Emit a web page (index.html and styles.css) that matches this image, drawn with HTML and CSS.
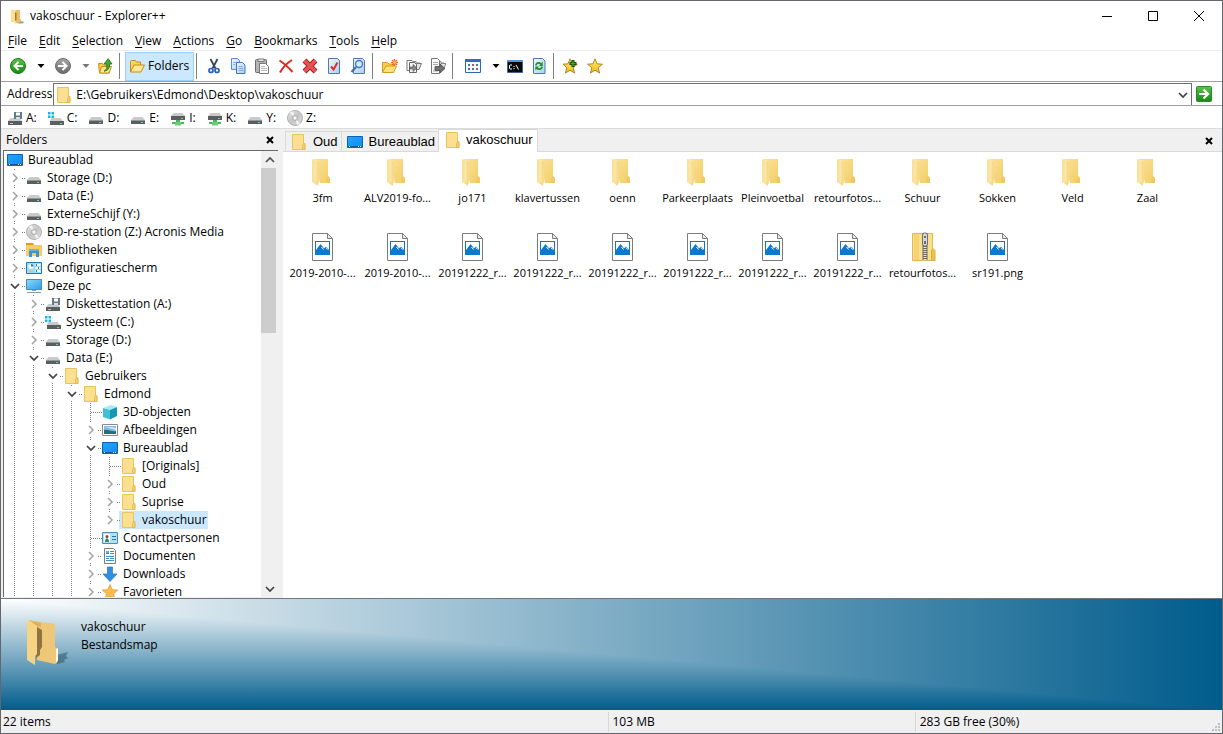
FILE: index.html
```html
<!DOCTYPE html>
<html lang="nl">
<head>
    <meta charset="UTF-8">
    <meta name="viewport" content="width=device-width, initial-scale=1.0">
    <title>vakoschuur - Explorer++</title>
    <link rel="stylesheet" href="styles.css">
</head>
<body>
    <!-- Icon sprite -->
    <svg class="sprite" aria-hidden="true">
        <defs>
            <linearGradient id="g-folder" x1="0" y1="0" x2="1" y2="1"><stop offset="0" stop-color="#fbe29a"/><stop offset="1" stop-color="#f3cd62"/></linearGradient>
            <linearGradient id="g-flap" x1="0" y1="0" x2="1" y2="0"><stop offset="0" stop-color="#f9df94"/><stop offset="1" stop-color="#fdeebb"/></linearGradient>
            <linearGradient id="g-green" x1="0" y1="0" x2="0" y2="1"><stop offset="0" stop-color="#5fc14b"/><stop offset="1" stop-color="#138a12"/></linearGradient>
            <linearGradient id="g-gray" x1="0" y1="0" x2="0" y2="1"><stop offset="0" stop-color="#a8a8a8"/><stop offset="1" stop-color="#696969"/></linearGradient>
            <linearGradient id="g-blue" x1="0" y1="0" x2="1" y2="1"><stop offset="0" stop-color="#2aa4ff"/><stop offset="1" stop-color="#0b8cf0"/></linearGradient>
            <linearGradient id="g-screen" x1="0" y1="0" x2="1" y2="1"><stop offset="0" stop-color="#8edafc"/><stop offset="1" stop-color="#2b9be8"/></linearGradient>
            <linearGradient id="g-disc" x1="0" y1="0" x2="1" y2="1"><stop offset="0" stop-color="#e8e8e8"/><stop offset=".5" stop-color="#c6c6c6"/><stop offset="1" stop-color="#dedede"/></linearGradient>
            <linearGradient id="g-star" x1="0" y1="0" x2="0" y2="1"><stop offset="0" stop-color="#fff27a"/><stop offset="1" stop-color="#f2b51c"/></linearGradient>
            <linearGradient id="g-page" x1="0" y1="0" x2="1" y2="1"><stop offset="0" stop-color="#f4f9ff"/><stop offset="1" stop-color="#a9cdf5"/></linearGradient>
        </defs>
        <symbol id="folder" viewBox="0 0 16 16">
            <path d="M1.500.5h11v9h1.500v6h-12.500z" fill="#fbe091" stroke="#e9c45c"/>
            <path d="M11.500 15.500v-4l1-2 1.500 1.500v4.500z" fill="#f5d06c" stroke="#deb54a" stroke-width=".7"/>
        </symbol>
        <symbol id="folder-mini" viewBox="0 0 16 16">
            <path d="M5 2h6v9l2 1v3H5z" fill="#e9bf62"/>
            <path d="M2 1l5 1.500V16l-3-2H2z" fill="#fbdf94"/>
            <path d="M6 4l1.500 1v7L6 13z" fill="#9c7c3c"/>
            <path d="M12 11h1v3h-1z" fill="#fff"/>
            <path d="M13 13l2 1-1 1.500H8z" fill="#9aa3a6"/>
        </symbol>
        <symbol id="folder-lg" viewBox="0 0 32 32">
            <path d="M7 3h14v17l2 2v5H13z" fill="url(#g-folder)"/>
            <path d="M5 3l7 2V27l-1 1V30L5 26z" fill="url(#g-flap)"/>
            <path d="M11 5l1 .5V26l-1 1V30l-3-2.300 1.500-2V5z" fill="#f4d37c" opacity=".7"/>
            <path d="M19.500 27v-5l1.500-2 2 2v5z" fill="#efc65c" opacity=".7"/>
        </symbol>
        <symbol id="picture" viewBox="1 1 32 32">
            <path d="M6.500 3.500h15l5 5v22h-20z" fill="#fff" stroke="#7c7c7c"/>
            <path d="M21.500 3.500v5h5z" fill="#ececec" stroke="#7c7c7c"/>
            <path d="M9 11h15v14H9z" fill="#0b79d0"/>
            <path d="M10 12h13v8l-3-3.500-2 1.800-3.500-4.300L10 20z" fill="#fff"/>
            <path d="M15.500 17l2 2.500M20 17.500l1.500 2" stroke="#fff"/>
        </symbol>
        <symbol id="zip" viewBox="0 1 32 32">
            <path d="M5.500 3.500h20v27h-20z" fill="#fbe08c" stroke="#dfb953"/>
            <path d="M7 4h5v26H7z" fill="#f6d374"/>
            <path d="M24.500 30.500V20l1.500-1.500 2 2v10z" fill="#efc04d" stroke="#dcae3f"/>
            <path d="M15.500 3h5v27h-5z" fill="#686868"/>
            <path d="M18 15v15" stroke="#e9e4cf" stroke-width="3" stroke-dasharray="1 1"/>
            <rect x="15.500" y="3" width="5" height="13" rx="2" fill="#d8d8d8" stroke="#707070"/>
            <path d="M17 6h2v2h-2zM17 11h2v3h-2z" fill="#6a6a6a"/>
        </symbol>
        <symbol id="drive" viewBox="0 0 16 16">
            <path d="M3.500 7h9L15 10H1z" fill="#c9cbcb"/>
            <path d="M1 10h14v4H1z" fill="#5a5e60"/>
            <path d="M1 10h14v1H1z" fill="#92989a"/>
            <path d="M11 12h2v1h-2z" fill="#5ce08a"/>
        </symbol>
        <symbol id="floppy" viewBox="0 0 16 16">
            <path d="M3.500 8h9L15 11H1z" fill="#c9cbcb"/>
            <path d="M1 11h14v4H1z" fill="#5a5e60"/>
            <path d="M3 13h3v1H3z" fill="#b8c6bc"/>
            <path d="M7 2h8v7H7z" fill="#64798a"/>
            <path d="M9 2.500h4v3H9z" fill="#fff"/>
            <path d="M9 7h4v2H9z" fill="#cfdde6"/>
        </symbol>
        <symbol id="system" viewBox="0 0 16 16">
            <path d="M3.500 8h9L15 11H2z" fill="#c9cbcb"/>
            <path d="M2 11h14v4H2z" fill="#5a5e60"/>
            <path d="M12 13h2v1h-2z" fill="#5ce08a"/>
            <path d="M0 2h2.500v2.500H0zM3.500 2H6v2.500H3.500zM0 5.500h2.500V8H0zM3.500 5.500H6V8H3.500z" fill="#18b4ea"/>
        </symbol>
        <symbol id="network" viewBox="0 0 16 16">
            <path d="M3.500 3h9L15 6H1z" fill="#c9cbcb"/>
            <path d="M1 6h14v4H1z" fill="#5a5e60"/>
            <path d="M11 8h2v1h-2z" fill="#5ce08a"/>
            <path d="M6 10h4v2h4v2H2v-2h4z" fill="#4bb55d"/>
            <path d="M5 12h6v3.500H5z" fill="#6ccb78"/>
        </symbol>
        <symbol id="disc" viewBox="0 0 16 16">
            <circle cx="8" cy="8" r="7.500" fill="url(#g-disc)" stroke="#b0b0b0"/>
            <path d="M8 8L3 2.500A7 7 0 0 1 6 1.200zM8 8l5 5.500A7 7 0 0 1 10 14.800z" fill="#f4f4f4"/>
            <circle cx="8" cy="8" r="2.500" fill="#e2e2e2" stroke="#b0b0b0"/>
            <circle cx="8" cy="8" r="1" fill="#fff"/>
        </symbol>
        <symbol id="desktop" viewBox="0 0 16 16">
            <path d="M.5 2.500h15v11H.5z" fill="url(#g-blue)" stroke="#0a63b4"/>
            <path d="M1 12h14v1H1z" fill="#0b5da8"/>
            <path d="M2 12h1v1H2zM11 12h1v1h-1zM13 12h1v1h-1z" fill="#d4ecff"/>
        </symbol>
        <symbol id="libraries" viewBox="0 0 16 16">
            <path d="M0 1h7l1 2h8v11H0z" fill="#f8cf5e"/>
            <path d="M0 1h7l1 2H0z" fill="#dc9a24"/>
            <path d="M3 15V7h10v8h-3v-4H6v4z" fill="#3f93d2"/>
            <path d="M3 7h10v2H3z" fill="#6bb2e4"/>
        </symbol>
        <symbol id="control" viewBox="0 0 16 16">
            <path d="M.5 2.500h15v11H.5z" fill="#9bdcf8" stroke="#2378b4"/>
            <circle cx="5" cy="6.500" r="2.500" fill="#fff"/>
            <path d="M5 6.500V4a2.500 2.500 0 0 1 2.500 2.500z" fill="#2378b4"/>
            <path d="M3 12v-1M5 12v-2M7 12v-1" stroke="#f7b53c"/>
            <path d="M9.500 5h5M9.500 8h5M9.500 11h5" stroke="#fff" stroke-width="2"/>
            <path d="M10 5h1M12 8h1M10 11h1" stroke="#2378b4" stroke-width="2"/>
        </symbol>
        <symbol id="computer" viewBox="0 0 16 16">
            <path d="M.5 1.500h15v10H.5z" fill="url(#g-screen)" stroke="#3f8fc0"/>
            <path d="M6 12h4v1H6z" fill="#8aa4b4"/>
            <path d="M1 14.500h14" stroke="#7ca0b8"/>
        </symbol>
        <symbol id="cube" viewBox="0 0 16 16">
            <path d="M1 4l8-3 6 2-7 3z" fill="#a4ecf4"/>
            <path d="M1 4l7 2v9.500L1 13z" fill="#3fc0d8"/>
            <path d="M8 6l7-3v9l-7 3.500z" fill="#1796b4"/>
        </symbol>
        <symbol id="pictures" viewBox="0 0 16 16">
            <path d="M.5 2.500h15v11H.5z" fill="#fff" stroke="#8c8c8c"/>
            <path d="M2 4h12v8H2z" fill="#7fbdea"/>
            <path d="M2 5c5 0 8 2 12 3V6L8 5z" fill="#dff0fa"/>
            <path d="M2 8c4-1 8 2 12 1v3H2z" fill="#2f6a7a"/>
        </symbol>
        <symbol id="contacts" viewBox="0 0 16 16">
            <path d="M.5 2.500h15v11H.5z" fill="#b4e0f6" stroke="#4a90bc"/>
            <path d="M2 4h6v8H2z" fill="#fff"/>
            <circle cx="5" cy="6.500" r="1.500" fill="#7a5030"/>
            <path d="M3 12c0-5 4-5 4 0z" fill="#2e8a6c"/>
            <path d="M10 6.500h4M10 9.500h4" stroke="#2878b0"/>
        </symbol>
        <symbol id="documents" viewBox="0 0 16 16">
            <path d="M2.500.5h9l2 2v13h-11z" fill="#fff" stroke="#7e7e7e"/>
            <path d="M4 5.500h3M8 3.500h4M8 5.500h4M4 8.500h8M4 10.500h3M8 10.500h4M4 12.500h8" stroke="#3690cc"/>
            <path d="M4 3h3v2H4z" fill="#5ab0e0"/>
        </symbol>
        <symbol id="download" viewBox="0 0 16 16">
            <path d="M5.500 1h5v7H15l-7 7.500L1 8h4.500z" fill="#2f8fe0" stroke="#2478c4" stroke-width=".7"/>
        </symbol>
        <symbol id="favorite" viewBox="0 0 16 16">
            <path d="M8 .5l2.200 5.200 5.600.4-4.300 3.700 1.400 5.600L8 12.300l-4.900 3.100 1.400-5.600L.2 6.100l5.600-.4z" fill="#fbbc4e" stroke="#e0952a" stroke-width=".7"/>
        </symbol>
        <symbol id="star" viewBox="0 0 16 16">
            <path d="M8 .8l2 5 5.400.4-4.200 3.500 1.400 5.400L8 12.200l-4.600 2.900 1.400-5.400L.6 6.200 6 5.800z" fill="url(#g-star)" stroke="#a87c12" stroke-width=".9"/>
        </symbol>
        <symbol id="star-add" viewBox="0 0 16 16">
            <path d="M7 .8l2 5 5.400.4-4.200 3.500 1.400 5.400L7 12.200l-4.600 2.900 1.400-5.400L0 6.200 5 5.800z" fill="url(#g-star)" stroke="#a87c12" stroke-width=".9"/>
            <path d="M10 2v7M6.500 5.500h7" stroke="#174d0c" stroke-width="3"/>
            <path d="M10 3v5M7.500 5.500h5" stroke="#3ca82a" stroke-width="1.200"/>
        </symbol>
        <symbol id="back" viewBox="0 0 16 16">
            <circle cx="8" cy="8" r="7.500" fill="url(#g-green)" stroke="#1b7a18"/>
            <path d="M8.500 4L4.500 8l4 4M4.500 8H13" fill="none" stroke="#fff" stroke-width="2"/>
        </symbol>
        <symbol id="forward" viewBox="0 0 16 16">
            <circle cx="8" cy="8" r="7.500" fill="url(#g-gray)" stroke="#6a6a6a"/>
            <path d="M7.500 4l4 4-4 4M11.500 8H3" fill="none" stroke="#fff" stroke-width="2"/>
        </symbol>
        <symbol id="up" viewBox="0 0 16 16">
            <path d="M1.500 5.500h4l1 1.500h6v8h-10z" fill="#f7cf4c" stroke="#c89216"/>
            <path d="M2.500 15l2-6.500h10L12 15z" fill="#fde88a" stroke="#c89216"/>
            <path d="M7 13c3-1 3-4 2.800-7H7l4.200-5.300L15 6h-2.500c.3 4-1.500 7-5.500 7z" fill="#43ae34" stroke="#1d6614" stroke-width=".8"/>
        </symbol>
        <symbol id="folders" viewBox="0 0 16 16">
            <path d="M1.500 14V3.500l1-1h4l1 1.500h4V7" fill="#f8d65c" stroke="#c58a1c"/>
            <path d="M1.500 14L5 7h10.500L12 14z" fill="#fde994" stroke="#c58a1c"/>
        </symbol>
        <symbol id="cut" viewBox="0 0 16 16">
            <path d="M4.500 1l5 9.500M11.500 1l-5 9.500" stroke="#39465a" stroke-width="1.800"/>
            <circle cx="5" cy="12.500" r="2" fill="none" stroke="#2461c0" stroke-width="1.700"/>
            <circle cx="11" cy="12.500" r="2" fill="none" stroke="#2461c0" stroke-width="1.700"/>
        </symbol>
        <symbol id="copy" viewBox="0 0 16 16">
            <path d="M1.500.5h6l2 2v9h-8z" fill="url(#g-page)" stroke="#5b8fd0"/>
            <path d="M3 4.500h4M3 6.500h2" stroke="#8fb6e4"/>
            <path d="M6.500 4.500h6l2.500 2.500v8.500H6.500z" fill="url(#g-page)" stroke="#3c78c4"/>
            <path d="M8.500 8.500h4M8.500 10.500h5M8.500 12.500h5" stroke="#7ba8e0"/>
        </symbol>
        <symbol id="paste" viewBox="0 0 16 16">
            <rect x="1.500" y="1.500" width="11" height="13" rx="1" fill="#b4b4b4" stroke="#6c6c6c"/>
            <path d="M4 1h6v2.500H4z" fill="#e8e8e8" stroke="#777"/>
            <path d="M5.500 5.500h6l3 3v7h-9z" fill="#fff" stroke="#777"/>
            <path d="M7 8.500h4M7 10.500h6M7 12.500h6" stroke="#b5b5b5"/>
        </symbol>
        <symbol id="delete" viewBox="0 0 16 16">
            <path d="M1.500 2.500c5 3 9 7 13 11.500M14 2C9 5 5 9 2 14.500" fill="none" stroke="#e0281c" stroke-width="2"/>
        </symbol>
        <symbol id="delete-perm" viewBox="0 0 16 16">
            <path d="M2.500 2.500l11 11M13.500 2.500l-11 11" stroke="#a81c1c" stroke-width="5.400"/>
            <path d="M2.500 2.500l11 11M13.500 2.500l-11 11" stroke="#e25454" stroke-width="3.600"/>
        </symbol>
        <symbol id="properties" viewBox="0 0 16 16">
            <path d="M2.500.5h9l2 2v13h-11z" fill="url(#g-page)" stroke="#4c78b8"/>
            <path d="M5 8.500l2.500 3 4-7" fill="none" stroke="#e0301c" stroke-width="2"/>
        </symbol>
        <symbol id="search" viewBox="0 0 16 16">
            <path d="M3.500.5h9l2 2v13h-11z" fill="url(#g-page)" stroke="#4c78b8"/>
            <circle cx="9" cy="6" r="3.500" fill="#d6ecff" stroke="#3f7cc4" stroke-width="1.400"/>
            <path d="M6 9l-4.500 5" stroke="#4a74a8" stroke-width="2.400"/>
        </symbol>
        <symbol id="new-folder" viewBox="0 0 16 16">
            <path d="M.5 14V4.500h5L7 6h5v2" fill="#f7cf4c" stroke="#d49c22"/>
            <path d="M.5 14.500L4 8h10.500l-3 6.500z" fill="#fde27a" stroke="#d49c22"/>
            <path d="M12.500 1v7M9 4.500h7M10 2l5 5M15 2l-5 5" stroke="#f0641e" stroke-width="1.200"/>
            <circle cx="12.500" cy="4.500" r="1.300" fill="#ffd95c"/>
        </symbol>
        <symbol id="copy-to" viewBox="0 0 16 16">
            <path d="M7 11V3.500h3L11.500 5H14v2" fill="#d0d0d0" stroke="#888"/>
            <path d="M8.500 11.500l2-6h5l-2.500 6z" fill="#e4e4e4" stroke="#777"/>
            <path d="M1 2.500h5l2 2v8H1z" fill="#fff" stroke="#777"/>
            <path d="M3.500 4.500h5l2 2v8h-7z" fill="#f2f2f2" stroke="#666"/>
            <path d="M4 9h3V6.500l4 3.500-4 3.500V11H4z" fill="#888" stroke="#555" stroke-width=".6"/>
        </symbol>
        <symbol id="move-to" viewBox="0 0 16 16">
            <path d="M8 12V3.500h3L12.500 5H14v3" fill="#d0d0d0" stroke="#888"/>
            <path d="M8.500 11.500l2.500-6h5l-2.500 6z" fill="#e4e4e4" stroke="#888"/>
            <path d="M1.500.5h6l2 2v13h-8z" fill="#fafafa" stroke="#777"/>
            <path d="M3 4.500h5M3 6.500h5M3 13h5" stroke="#aaa"/>
            <path d="M5 8.500h5V6l5 4.500-5 4.500v-2.500H5z" fill="#707070" stroke="#484848" stroke-width=".8"/>
        </symbol>
        <symbol id="views" viewBox="0 0 16 16">
            <path d="M.5 1.500h15v13H.5z" fill="#f6faff" stroke="#2c68b4"/>
            <path d="M0 1h16v3H0z" fill="#2f6ec2"/>
            <path d="M3 6h2v2H3zM11 6h2v2h-2zM7 10h2v2H7z" fill="#3a78c8"/>
            <path d="M7 6h2v2H7zM11 10h2v2h-2z" fill="#c0563c"/>
            <path d="M3 10h2v2H3z" fill="#55667c"/>
        </symbol>
        <symbol id="prompt" viewBox="0 0 16 16">
            <path d="M.5 2.500h15v12H.5z" fill="#0a0a0a" stroke="#3c6496"/>
            <path d="M0 2h16v2H0z" fill="#5b94d8"/>
            <path d="M5 7H3L2.500 7.500v3L3 11h2M7 8v1M7 10v1M9 7l2.500 4.500" fill="none" stroke="#fff"/>
        </symbol>
        <symbol id="refresh" viewBox="0 0 16 16">
            <path d="M2.500.5h9l2.500 2.500v12.500H2.500z" fill="url(#g-page)" stroke="#4c78b8"/>
            <path d="M5 7.500c0-3 4-3.500 5-1.500M11 8.500c0 3-4 3.500-5 1.500" fill="none" stroke="#169428" stroke-width="1.700"/>
            <path d="M11.700 3.500V8H8zM4.300 12.500V8.500H8z" fill="#169428"/>
        </symbol>
        <symbol id="go" viewBox="0 0 16 16">
            <rect x=".5" y=".5" width="15" height="15" rx="1" fill="url(#g-green)" stroke="#2a8a28"/>
            <path d="M7.500 3.500L12 8l-4.500 4.500M12 8H3" fill="none" stroke="#fff" stroke-width="2.200"/>
        </symbol>
        <symbol id="close" viewBox="0 0 8 8"><path d="M1 1l6 6M7 1L1 7" stroke="#000" stroke-width="2"/></symbol>
        <symbol id="right" viewBox="0 0 10 10"><path d="M3 1l4 4-4 4" fill="none" stroke="#a3a3a3" stroke-width="1.500"/></symbol>
        <symbol id="down" viewBox="0 0 10 10"><path d="M1 3l4 4 4-4" fill="none" stroke="#404040" stroke-width="1.700"/></symbol>
        <symbol id="uparrow" viewBox="0 0 10 10"><path d="M1 7l4-4 4 4" fill="none" stroke="#505050" stroke-width="1.700"/></symbol>
        <symbol id="caret" viewBox="0 0 8 8"><path d="M.5 2h7L4 6z" fill="currentColor"/></symbol>
        <symbol id="preview-folder" viewBox="0 0 48 48">
            <path d="M32 37l11-3-2 4 2 2-4 2 1 2-8 2z" fill="#2f5564" opacity=".55"/>
            <path d="M10 3l20 3v23l3 2v12l-3 3-18-4z" fill="#edc878"/>
            <path d="M31 31l2-1v12l-2 3z" fill="#f8f8f0"/>
            <path d="M12 9l5 3v17l-2 3v5l-4 3z" fill="#8f7440"/>
            <path d="M2 3l2-1 8 6v28l-2 2v9L2 42z" fill="#f7d384"/>
            <path d="M4 2l12 3v4l-4-1z" fill="#dcb05c"/>
        </symbol>
    </svg>

    <div class="window">
        <header class="titlebar">
            <svg class="icon"><use href="#folder-mini"/></svg>
            <h1 class="title">vakoschuur - Explorer++</h1>
            <div class="window-controls">
                <button aria-label="Minimize"><svg viewBox="0 0 10 10"><path d="M0 5.500h10" stroke="#000"/></svg></button>
                <button aria-label="Maximize"><svg viewBox="0 0 10 10"><path d="M.5.5h9v9h-9z" fill="none" stroke="#000"/></svg></button>
                <button aria-label="Close"><svg viewBox="0 0 10 10"><path d="M0 0l10 10M10 0L0 10" stroke="#000"/></svg></button>
            </div>
        </header>

        <nav class="menubar">
            <button><u>F</u>ile</button>
            <button><u>E</u>dit</button>
            <button><u>S</u>election</button>
            <button><u>V</u>iew</button>
            <button><u>A</u>ctions</button>
            <button><u>G</u>o</button>
            <button><u>B</u>ookmarks</button>
            <button><u>T</u>ools</button>
            <button><u>H</u>elp</button>
        </nav>

        <div class="toolbar">
            <button class="tool tool-split" aria-label="Back"><svg class="icon"><use href="#back"/></svg></button>
            <button class="tool-caret" aria-label="Back history"><svg><use href="#caret"/></svg></button>
            <button class="tool tool-split" aria-label="Forward"><svg class="icon"><use href="#forward"/></svg></button>
            <button class="tool-caret disabled" aria-label="Forward history"><svg><use href="#caret"/></svg></button>
            <button class="tool" aria-label="Up"><svg class="icon"><use href="#up"/></svg></button>
            <span class="separator"></span>
            <button class="tool-folders"><svg class="icon"><use href="#folders"/></svg>Folders</button>
            <span class="separator"></span>
            <button class="tool" aria-label="Cut"><svg class="icon"><use href="#cut"/></svg></button>
            <button class="tool" aria-label="Copy"><svg class="icon"><use href="#copy"/></svg></button>
            <button class="tool" aria-label="Paste"><svg class="icon"><use href="#paste"/></svg></button>
            <button class="tool" aria-label="Delete"><svg class="icon"><use href="#delete"/></svg></button>
            <button class="tool" aria-label="Delete permanently"><svg class="icon"><use href="#delete-perm"/></svg></button>
            <button class="tool" aria-label="Properties"><svg class="icon"><use href="#properties"/></svg></button>
            <button class="tool" aria-label="Search"><svg class="icon"><use href="#search"/></svg></button>
            <span class="separator"></span>
            <button class="tool" aria-label="New folder"><svg class="icon"><use href="#new-folder"/></svg></button>
            <button class="tool" aria-label="Copy to"><svg class="icon"><use href="#copy-to"/></svg></button>
            <button class="tool" aria-label="Move to"><svg class="icon"><use href="#move-to"/></svg></button>
            <span class="separator"></span>
            <button class="tool tool-split" aria-label="Views"><svg class="icon"><use href="#views"/></svg></button>
            <button class="tool-caret" aria-label="Choose view"><svg><use href="#caret"/></svg></button>
            <button class="tool" aria-label="Command prompt"><svg class="icon"><use href="#prompt"/></svg></button>
            <button class="tool" aria-label="Refresh"><svg class="icon"><use href="#refresh"/></svg></button>
            <span class="separator"></span>
            <button class="tool" aria-label="Add bookmark"><svg class="icon"><use href="#star-add"/></svg></button>
            <button class="tool" aria-label="Bookmarks"><svg class="icon"><use href="#star"/></svg></button>
        </div>

        <div class="addressbar">
            <label for="address">Address</label>
            <div class="address-box">
                <svg class="icon"><use href="#folder"/></svg>
                <input id="address" type="text" value="E:\Gebruikers\Edmond\Desktop\vakoschuur">
                <button aria-label="Address history"><svg class="chevron"><use href="#down"/></svg></button>
            </div>
            <button class="go" aria-label="Go"><svg class="icon"><use href="#go"/></svg></button>
        </div>

        <div class="drives">
            <button><svg class="icon"><use href="#floppy"/></svg>A:</button>
            <button><svg class="icon"><use href="#system"/></svg>C:</button>
            <button><svg class="icon"><use href="#drive"/></svg>D:</button>
            <button><svg class="icon"><use href="#drive"/></svg>E:</button>
            <button><svg class="icon"><use href="#network"/></svg>I:</button>
            <button><svg class="icon"><use href="#network"/></svg>K:</button>
            <button><svg class="icon"><use href="#drive"/></svg>Y:</button>
            <button><svg class="icon"><use href="#disc"/></svg>Z:</button>
        </div>

        <div class="workspace">
            <aside class="sidebar">
                <div class="sidebar-header">
                    <h2>Folders</h2>
                    <button aria-label="Close folders"><svg class="close"><use href="#close"/></svg></button>
                </div>
                <div class="tree-box">
                    <ul class="tree">
                        <li><a href="#"><svg class="icon"><use href="#desktop"/></svg>Bureaublad</a></li>
                        <li><button class="node" aria-label="Expand"><svg><use href="#right"/></svg></button><a href="#"><svg class="icon"><use href="#drive"/></svg>Storage (D:)</a></li>
                        <li><button class="node" aria-label="Expand"><svg><use href="#right"/></svg></button><a href="#"><svg class="icon"><use href="#drive"/></svg>Data (E:)</a></li>
                        <li><button class="node" aria-label="Expand"><svg><use href="#right"/></svg></button><a href="#"><svg class="icon"><use href="#drive"/></svg>ExterneSchijf (Y:)</a></li>
                        <li><button class="node" aria-label="Expand"><svg><use href="#right"/></svg></button><a href="#"><svg class="icon"><use href="#disc"/></svg>BD-re-station (Z:) Acronis Media</a></li>
                        <li><button class="node" aria-label="Expand"><svg><use href="#right"/></svg></button><a href="#"><svg class="icon"><use href="#libraries"/></svg>Bibliotheken</a></li>
                        <li><button class="node" aria-label="Expand"><svg><use href="#right"/></svg></button><a href="#"><svg class="icon"><use href="#control"/></svg>Configuratiescherm</a></li>
                        <li><button class="node" aria-label="Collapse"><svg><use href="#down"/></svg></button><a href="#"><svg class="icon"><use href="#computer"/></svg>Deze pc</a></li>
                        <li><i></i><button class="node" aria-label="Expand"><svg><use href="#right"/></svg></button><a href="#"><svg class="icon"><use href="#floppy"/></svg>Diskettestation (A:)</a></li>
                        <li><i></i><button class="node" aria-label="Expand"><svg><use href="#right"/></svg></button><a href="#"><svg class="icon"><use href="#system"/></svg>Systeem (C:)</a></li>
                        <li><i></i><button class="node" aria-label="Expand"><svg><use href="#right"/></svg></button><a href="#"><svg class="icon"><use href="#drive"/></svg>Storage (D:)</a></li>
                        <li><i></i><button class="node" aria-label="Collapse"><svg><use href="#down"/></svg></button><a href="#"><svg class="icon"><use href="#drive"/></svg>Data (E:)</a></li>
                        <li><i></i><i></i><button class="node" aria-label="Collapse"><svg><use href="#down"/></svg></button><a href="#"><svg class="icon"><use href="#folder"/></svg>Gebruikers</a></li>
                        <li><i></i><i></i><i></i><button class="node" aria-label="Collapse"><svg><use href="#down"/></svg></button><a href="#"><svg class="icon"><use href="#folder"/></svg>Edmond</a></li>
                        <li><i></i><i></i><i></i><i></i><span class="node leaf"></span><a href="#"><svg class="icon"><use href="#cube"/></svg>3D-objecten</a></li>
                        <li><i></i><i></i><i></i><i></i><button class="node" aria-label="Expand"><svg><use href="#right"/></svg></button><a href="#"><svg class="icon"><use href="#pictures"/></svg>Afbeeldingen</a></li>
                        <li><i></i><i></i><i></i><i></i><button class="node" aria-label="Collapse"><svg><use href="#down"/></svg></button><a href="#"><svg class="icon"><use href="#desktop"/></svg>Bureaublad</a></li>
                        <li><i></i><i></i><i></i><i></i><i></i><span class="node leaf"></span><a href="#"><svg class="icon"><use href="#folder"/></svg>[Originals]</a></li>
                        <li><i></i><i></i><i></i><i></i><i></i><button class="node" aria-label="Expand"><svg><use href="#right"/></svg></button><a href="#"><svg class="icon"><use href="#folder"/></svg>Oud</a></li>
                        <li><i></i><i></i><i></i><i></i><i></i><button class="node" aria-label="Expand"><svg><use href="#right"/></svg></button><a href="#"><svg class="icon"><use href="#folder"/></svg>Suprise</a></li>
                        <li><i></i><i></i><i></i><i></i><i></i><button class="node last" aria-label="Expand"><svg><use href="#right"/></svg></button><a href="#" class="selected"><svg class="icon"><use href="#folder"/></svg>vakoschuur</a></li>
                        <li><i></i><i></i><i></i><i></i><span class="node leaf"></span><a href="#"><svg class="icon"><use href="#contacts"/></svg>Contactpersonen</a></li>
                        <li><i></i><i></i><i></i><i></i><button class="node" aria-label="Expand"><svg><use href="#right"/></svg></button><a href="#"><svg class="icon"><use href="#documents"/></svg>Documenten</a></li>
                        <li><i></i><i></i><i></i><i></i><button class="node" aria-label="Expand"><svg><use href="#right"/></svg></button><a href="#"><svg class="icon"><use href="#download"/></svg>Downloads</a></li>
                        <li><i></i><i></i><i></i><i></i><button class="node" aria-label="Expand"><svg><use href="#right"/></svg></button><a href="#"><svg class="icon"><use href="#favorite"/></svg>Favorieten</a></li>
                    </ul>
                    <div class="scrollbar">
                        <button aria-label="Scroll up"><svg class="chevron"><use href="#uparrow"/></svg></button>
                        <div class="scroll-track"><div class="scroll-thumb"></div></div>
                        <button aria-label="Scroll down"><svg class="chevron"><use href="#down"/></svg></button>
                    </div>
                </div>
            </aside>

            <main class="content">
                <div class="tabs">
                    <button class="tab"><svg class="icon"><use href="#folder"/></svg>Oud</button>
                    <button class="tab"><svg class="icon"><use href="#desktop"/></svg>Bureaublad</button>
                    <button class="tab active"><svg class="icon"><use href="#folder"/></svg>vakoschuur</button>
                    <button class="tab-close" aria-label="Close tab"><svg class="close"><use href="#close"/></svg></button>
                </div>
                <ul class="files">
                    <li><svg><use href="#folder-lg"/></svg><span>3fm</span></li>
                    <li><svg><use href="#folder-lg"/></svg><span>ALV2019-fo...</span></li>
                    <li><svg><use href="#folder-lg"/></svg><span>jo171</span></li>
                    <li><svg><use href="#folder-lg"/></svg><span>klavertussen</span></li>
                    <li><svg><use href="#folder-lg"/></svg><span>oenn</span></li>
                    <li><svg><use href="#folder-lg"/></svg><span>Parkeerplaats</span></li>
                    <li><svg><use href="#folder-lg"/></svg><span>Pleinvoetbal</span></li>
                    <li><svg><use href="#folder-lg"/></svg><span>retourfotos...</span></li>
                    <li><svg><use href="#folder-lg"/></svg><span>Schuur</span></li>
                    <li><svg><use href="#folder-lg"/></svg><span>Sokken</span></li>
                    <li><svg><use href="#folder-lg"/></svg><span>Veld</span></li>
                    <li><svg><use href="#folder-lg"/></svg><span>Zaal</span></li>
                    <li><svg><use href="#picture"/></svg><span>2019-2010-...</span></li>
                    <li><svg><use href="#picture"/></svg><span>2019-2010-...</span></li>
                    <li><svg><use href="#picture"/></svg><span>20191222_r...</span></li>
                    <li><svg><use href="#picture"/></svg><span>20191222_r...</span></li>
                    <li><svg><use href="#picture"/></svg><span>20191222_r...</span></li>
                    <li><svg><use href="#picture"/></svg><span>20191222_r...</span></li>
                    <li><svg><use href="#picture"/></svg><span>20191222_r...</span></li>
                    <li><svg><use href="#picture"/></svg><span>20191222_r...</span></li>
                    <li><svg><use href="#zip"/></svg><span>retourfotos...</span></li>
                    <li><svg><use href="#picture"/></svg><span>sr191.png</span></li>
                </ul>
            </main>
        </div>

        <section class="preview">
            <svg class="preview-icon"><use href="#preview-folder"/></svg>
            <div>
                <p>vakoschuur</p>
                <p>Bestandsmap</p>
            </div>
        </section>

        <footer class="statusbar">
            <span class="status-wide">22 items</span>
            <span>103 MB</span>
            <span>283 GB free (30%)</span>
            <svg class="grip" viewBox="0 0 9 9"><path d="M6 0h2v2H6zM3 3h2v2H3zM6 3h2v2H6zM0 6h2v2H0zM3 6h2v2H3zM6 6h2v2H6z" fill="#bfbfbf"/></svg>
        </footer>
    </div>
</body>
</html>
```
FILE: styles.css
```css
* {
    margin: 0;
    padding: 0;
    box-sizing: border-box;
}

body {
    background: #fff;
    color: #000;
    font-family: "Open Sans", "Noto Sans", sans-serif;
    font-size: 12px;
    line-height: 18px;
}

button,
input {
    border: none;
    background: none;
    color: inherit;
    font: inherit;
}

button {
    display: flex;
    align-items: center;
    justify-content: center;
}

ul {
    list-style: none;
}

.sprite {
    position: absolute;
    width: 0;
    height: 0;
}

.icon {
    flex: none;
    width: 16px;
    height: 16px;
}

.chevron {
    width: 10px;
    height: 10px;
}

.close {
    width: 8px;
    height: 8px;
}

.window {
    display: flex;
    flex-direction: column;
    height: 100vh;
    border: 1px solid #63666b;
    overflow: hidden;
}

/* Title bar */
.titlebar {
    display: flex;
    align-items: center;
    height: 30px;
    padding-left: 8px;
}

.title {
    flex: 1;
    margin-left: 5px;
    font-size: 12px;
    font-weight: 400;
}

.window-controls {
    display: flex;
}

.window-controls button {
    width: 46px;
    height: 30px;
}

.window-controls svg {
    width: 10px;
    height: 10px;
}

/* Menu */
.menubar {
    display: flex;
    height: 20px;
    padding-left: 1px;
    border-bottom: 1px solid #ececec;
}

.menubar button {
    padding: 0 6px;
}

.menubar u {
    text-underline-offset: 2px;
}

/* Toolbar */
.toolbar {
    display: flex;
    align-items: center;
    height: 31px;
    padding-left: 2px;
    border-bottom: 1px solid #a0a0a0;
}

.tool {
    width: 24px;
    height: 28px;
}

.tool-split {
    width: 30px;
}

.tool-caret {
    width: 15px;
    height: 28px;
}

.tool-caret svg {
    width: 8px;
    height: 8px;
}

.disabled {
    color: #777;
}

.separator {
    width: 1px;
    height: 26px;
    margin: 0 5px 0 2px;
    background: #808080;
}

.tool-folders {
    gap: 3px;
    height: 29px;
    padding: 0 4px 0 3px;
    border: 1px solid #99d1ff;
    background: #cce8ff;
}

/* Address */
.addressbar {
    display: flex;
    align-items: center;
    height: 24px;
    padding-left: 6px;
    border-bottom: 1px solid #a0a0a0;
}

.address-box {
    display: flex;
    flex: 1;
    align-items: center;
    height: 22px;
    margin-left: 1px;
    padding: 1px 0 0 2px;
    border: 1px solid #707070;
    border-bottom: none;
}

.address-box input {
    flex: 1;
    margin-left: 4px;
    outline: none;
}

.address-box button {
    width: 17px;
}

.go {
    width: 30px;
    padding-right: 6px;
}

/* Drives */
.drives {
    display: flex;
    height: 23px;
    padding: 1px 0 0 1px;
    border-bottom: 1px solid #dcdcdc;
}

.drives button {
    gap: 3px;
    padding: 0 6px 0 5px;
}

/* Folder tree */
.workspace {
    display: flex;
    flex: 1;
    min-height: 0;
    background: #f0f0f0;
}

.sidebar {
    display: flex;
    flex-direction: column;
    width: 277px;
    padding: 0 0 1px 2px;
}

.sidebar-header {
    display: flex;
    align-items: center;
    justify-content: space-between;
    height: 21px;
    padding-left: 3px;
}

.sidebar-header h2 {
    font-size: 12px;
    font-weight: 400;
}

.sidebar-header button {
    width: 16px;
    height: 16px;
}

.tree-box {
    display: flex;
    flex: 1;
    min-height: 0;
    border-top: 1px solid #696969;
    border-left: 1px solid #696969;
    background: #fff;
}

.tree {
    flex: 1;
    padding-left: 1px;
    overflow: hidden;
}

.tree li {
    display: flex;
    height: 18px;
}

.tree a {
    display: flex;
    align-items: center;
    gap: 5px;
    padding: 0 1px 0 2px;
    color: inherit;
    text-decoration: none;
    white-space: nowrap;
}

.tree .selected {
    background: #cce8ff;
}

.tree i,
.node {
    flex: none;
    width: 19px;
    height: 18px;
    background: repeating-linear-gradient(#808080 0 1px, transparent 1px 2px) 9px 0 / 1px 100% no-repeat;
}

.node {
    position: relative;
}

.node svg {
    width: 10px;
    height: 14px;
    background: #fff;
}

.node::after {
    content: "";
    position: absolute;
    top: 9px;
    right: -2px;
    width: 4px;
    height: 1px;
    background: repeating-linear-gradient(to right, #808080 0 1px, transparent 1px 2px);
}

.leaf::after {
    width: 11px;
}

.last {
    background-size: 1px 50%;
}

.scrollbar {
    display: flex;
    flex-direction: column;
    width: 17px;
    background: #f0f0f0;
}

.scrollbar button {
    height: 17px;
}

.scroll-track {
    flex: 1;
}

.scroll-thumb {
    width: 15px;
    height: 40%;
    background: #cdcdcd;
}

/* Tabs and files */
.content {
    flex: 1;
    display: flex;
    flex-direction: column;
    min-width: 0;
    margin-left: 5px;
    background: #fff;
}

.tabs {
    display: flex;
    align-items: flex-end;
    height: 23px;
    padding-left: 2px;
    border-bottom: 1px solid #d9d9d9;
    background: #f0f0f0;
}

.tab {
    gap: 6px;
    height: 20px;
    padding: 0 3px 0 5px;
    border: 1px solid #d9d9d9;
    border-bottom: none;
    border-right: none;
    font-family: "Liberation Sans", Arial, sans-serif;
    font-size: 13px;
}

.tab.active {
    gap: 5px;
    height: 23px;
    margin-bottom: -1px;
    padding: 0 4px 2px 6px;
    border-right: 1px solid #d9d9d9;
    background: #fff;
}

.tab-close {
    width: 16px;
    height: 20px;
    margin-left: auto;
    margin-right: 5px;
}

.files {
    display: flex;
    flex-wrap: wrap;
    align-content: flex-start;
    padding-left: 2px;
    font-size: 11px;
}

.files li {
    display: flex;
    flex-direction: column;
    align-items: center;
    width: 75px;
    height: 75px;
    padding-top: 4px;
    white-space: nowrap;
}

.files svg {
    width: 32px;
    height: 32px;
    margin-bottom: 1px;
}

/* Preview */
.preview {
    display: flex;
    gap: 8px;
    height: 112px;
    padding: 19px 24px;
    border-top: 1px solid #70787c;
    background: linear-gradient(to right, #fff, #005c8c), linear-gradient(#fff, #005c8c);
    background-blend-mode: darken;
}

.preview-icon {
    width: 48px;
    height: 48px;
}

/* Status bar */
.statusbar {
    display: flex;
    position: relative;
    height: 23px;
    padding: 2px 0 1px;
    background: #f0f0f0;
}

.statusbar span {
    flex: 1;
    padding-left: 4px;
    border-left: 1px solid #d7d7d7;
    line-height: 20px;
}

.statusbar .status-wide {
    flex: 2;
    padding-left: 2px;
    border-left: none;
}

.grip {
    position: absolute;
    right: 1px;
    bottom: 1px;
    width: 9px;
    height: 9px;
}
```
